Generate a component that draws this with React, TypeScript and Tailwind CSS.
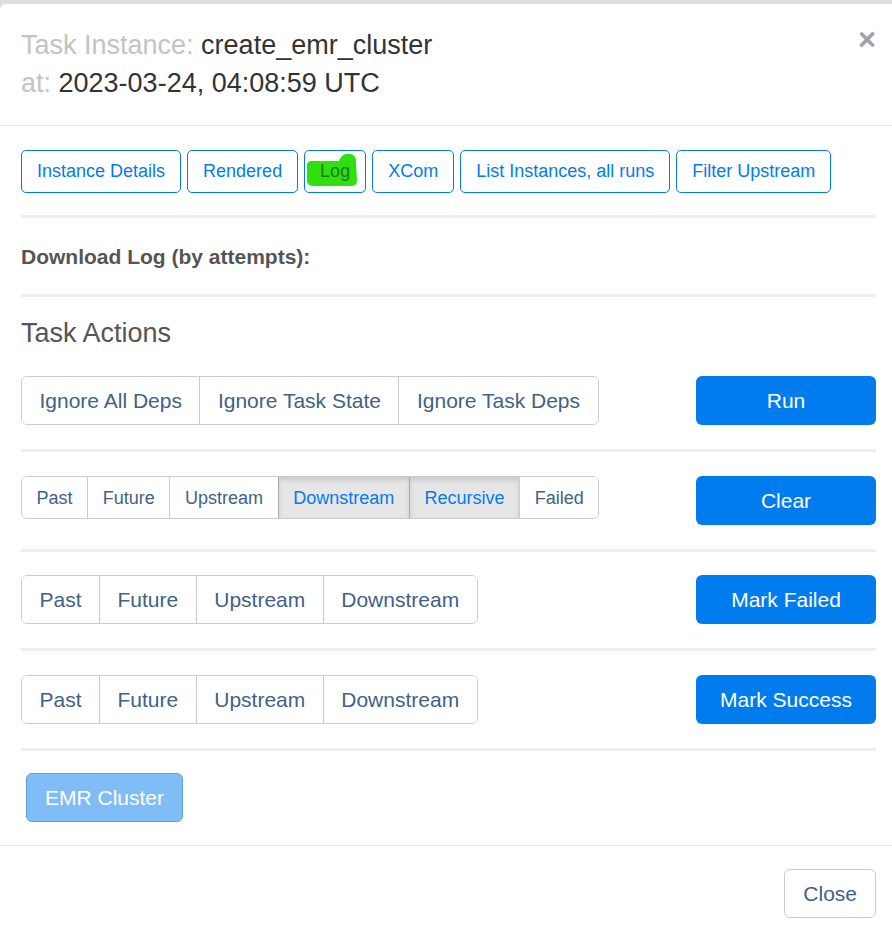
const tabs = ["Instance Details", "Rendered", "Log", "XCom", "List Instances, all runs", "Filter Upstream"];

type Item = { label: string; active?: boolean };

const Group = ({ items, small }: { items: Item[]; small?: boolean }) => {
  return (
    <div className="inline-flex rounded-[6px] border border-[#cccccc] overflow-hidden">
      {items.map((it, i) => (
        <div
          key={i}
          className={
            (small ? "h-[41px] px-[14.6px] text-[18px] " : "h-[47px] px-[17.5px] text-[21px] ") +
            "flex items-center leading-none " +
            (i > 0 ? "border-l " : "") +
            (it.active
              ? "border-[#adadad] bg-[#e6e6e6] text-[#017cee] shadow-[inset_0_3px_5px_rgba(0,0,0,0.125)]"
              : "border-[#cccccc] bg-white text-[#3f6288]")
          }
        >
          {it.label}
        </div>
      ))}
    </div>
  );
};

const ActionBtn = ({ label }: { label: string }) => (
  <button className="w-[180px] h-[49px] shrink-0 rounded-[6px] bg-[#017cee] text-white text-[21px] leading-none">
    {label}
  </button>
);

const Rule = ({ className }: { className: string }) => (
  <div className={"h-[3px] bg-[#eeeeee] " + className} />
);

// hand-drawn green highlighter over the Log tab
const LogTab = () => (
  <div className="relative h-[43px] w-[62px] rounded-[5px] border border-[#017cee] flex items-center justify-center text-[18px]">
    <svg className="absolute left-0 top-0" width="62" height="43" viewBox="0 0 62 43">
      <path
        d="M2 14 Q2 10 7 10 L34 10 Q36 4 41 3 L46 3 Q52 5 51 12 L52 29 Q52 35 46 35 L9 35 Q2 35 2 30 Z"
        fill="#2fe010"
      />
    </svg>
    <span className="relative text-[#1c7d1c]">Log</span>
  </div>
);

export default function App() {
  return (
    <div className="min-h-screen bg-gradient-to-b from-[#dedede] to-[#ececec] pt-[4px] font-['Liberation_Sans',Arial,sans-serif]">
      <div className="bg-white rounded-tl-[6px] min-h-[921px]">
        {/* header */}
        <div className="relative px-[21px] pt-[22px] pb-[23px] border-b border-[#e5e5e5] text-[27px] leading-[38px]">
          <div>
            <span className="text-[#c3c3c3]">Task Instance:</span>{" "}
            <span className="text-[#333333]">create_emr_cluster</span>
          </div>
          <div>
            <span className="text-[#c3c3c3]">at:</span>{" "}
            <span className="text-[#333333]">2023-03-24, 04:08:59 UTC</span>
          </div>
          <button className="absolute right-[16px] top-[20px] text-[31px] font-bold leading-none text-[#a2a2a2]">
            ×
          </button>
        </div>

        {/* body */}
        <div className="pl-[21px] pr-[16px] pt-[24px] pb-[23px]">
          <div className="flex gap-[6px]">
            {tabs.map((t) =>
              t === "Log" ? (
                <LogTab key={t} />
              ) : (
                <div
                  key={t}
                  className="h-[43px] px-[15px] rounded-[5px] border border-[#017cee] text-[#017cee] text-[18px] flex items-center"
                >
                  {t}
                </div>
              )
            )}
          </div>

          <Rule className="mt-[22px]" />
          <div className="mt-[24px] text-[21px] leading-[30px] font-bold text-[#555555]">
            Download Log (by attempts):
          </div>
          <Rule className="mt-[22px]" />

          <h3 className="mt-[21px] text-[27px] leading-[30px] text-[#555555]">Task Actions</h3>

          <div className="mt-[28px] flex items-start justify-between">
            <Group items={[{ label: "Ignore All Deps" }, { label: "Ignore Task State" }, { label: "Ignore Task Deps" }]} />
            <ActionBtn label="Run" />
          </div>
          <Rule className="mt-[24px]" />

          <div className="mt-[24px] flex items-start justify-between">
            <Group
              small
              items={[
                { label: "Past" },
                { label: "Future" },
                { label: "Upstream" },
                { label: "Downstream", active: true },
                { label: "Recursive", active: true },
                { label: "Failed" },
              ]}
            />
            <ActionBtn label="Clear" />
          </div>
          <Rule className="mt-[24px]" />

          <div className="mt-[23px] flex items-start justify-between">
            <Group items={[{ label: "Past" }, { label: "Future" }, { label: "Upstream" }, { label: "Downstream" }]} />
            <ActionBtn label="Mark Failed" />
          </div>
          <Rule className="mt-[24px]" />

          <div className="mt-[24px] flex items-start justify-between">
            <Group items={[{ label: "Past" }, { label: "Future" }, { label: "Upstream" }, { label: "Downstream" }]} />
            <ActionBtn label="Mark Success" />
          </div>
          <Rule className="mt-[24px]" />

          <button className="mt-[22px] ml-[5px] h-[49px] px-[18px] rounded-[6px] border border-[#5fa0dd] bg-[#80bdf6] text-white text-[21px] leading-none">
            EMR Cluster
          </button>
        </div>

        {/* footer */}
        <div className="border-t border-[#e5e5e5] pt-[23px] pr-[16px] flex justify-end">
          <button className="h-[49px] px-[18px] rounded-[6px] border border-[#cccccc] bg-white text-[#3f6288] text-[21px] leading-none">
            Close
          </button>
        </div>
      </div>
    </div>
  );
}
